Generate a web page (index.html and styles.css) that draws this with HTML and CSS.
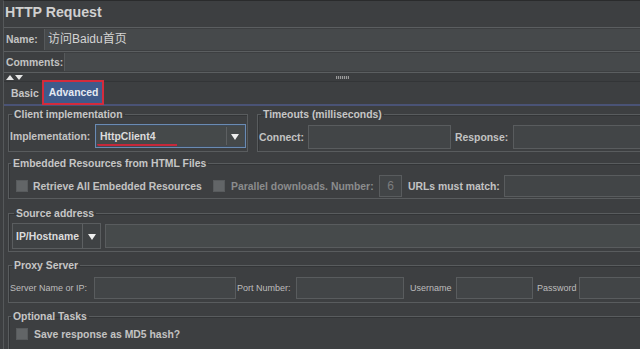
FILE: index.html
```html
<!DOCTYPE html>
<html>
<head>
<meta charset="utf-8">
<link rel="stylesheet" href="styles.css">
</head>
<body>
<div class="app">
  <div class="title">HTTP Request</div>
  <div class="row name-row">
    <span class="lbl name-lbl">Name:</span>
    <div class="field name-field">访问Baidu首页</div>
  </div>
  <div class="row comments-row">
    <span class="lbl comments-lbl">Comments:</span>
    <div class="field"></div>
  </div>
  <div class="splitter">
    <svg class="arrows" width="18" height="7" viewBox="0 0 18 7"><polygon points="0,6 4,1 8,6" fill="#e6e6e6"/><polygon points="9,1 17,1 13,6" fill="#e6e6e6"/></svg>
    <span class="grip"></span>
  </div>
  <div class="tabs">
    <span class="tab">Basic</span>
    <span class="tab active">Advanced</span>
  </div>
  <div class="panel">
    <div class="grp-row">
      <fieldset class="grp client">
        <legend>Client implementation</legend>
        <div class="line">
          <span class="lbl impl-lbl">Implementation:</span>
          <div class="combo focus">
            <span class="combo-text">HttpClient4</span>
            <span class="combo-btn"><svg width="8" height="7" viewBox="0 0 8 7"><polygon points="0,1 8,1 4,7" fill="#eee"/></svg></span>
            <span class="mark"></span>
          </div>
        </div>
      </fieldset>
      <fieldset class="grp timeouts open">
        <legend>Timeouts (milliseconds)</legend>
        <div class="line">
          <span class="lbl conn-lbl">Connect:</span>
          <div class="input w-connect"></div>
          <span class="lbl resp-lbl">Response:</span>
          <div class="input grow"></div>
        </div>
      </fieldset>
    </div>
    <fieldset class="grp embedded open">
      <legend>Embedded Resources from HTML Files</legend>
      <div class="line">
        <span class="check"></span><span class="lbl cb-lbl retr-lbl">Retrieve All Embedded Resources</span>
        <span class="check"></span><span class="lbl cb-lbl par-lbl disabled">Parallel downloads. Number:</span>
        <div class="input num">6</div>
        <span class="lbl urls-lbl">URLs must match:</span>
        <div class="input grow"></div>
      </div>
    </fieldset>
    <fieldset class="grp source open">
      <legend>Source address</legend>
      <div class="line">
        <div class="combo ip">
          <span class="combo-text">IP/Hostname</span>
          <span class="combo-btn"><svg width="8" height="7" viewBox="0 0 8 7"><polygon points="0,1 8,1 4,7" fill="#eee"/></svg></span>
        </div>
        <div class="input grow src-input"></div>
      </div>
    </fieldset>
    <fieldset class="grp proxy open">
      <legend>Proxy Server</legend>
      <div class="line">
        <span class="small server-lbl">Server Name or IP:</span>
        <div class="input w-server"></div>
        <span class="small port-lbl">Port Number:</span>
        <div class="input w-port"></div>
        <span class="small user-lbl">Username</span>
        <div class="input w-user"></div>
        <span class="small pass-lbl">Password</span>
        <div class="input grow"></div>
      </div>
    </fieldset>
    <fieldset class="grp optional open">
      <legend>Optional Tasks</legend>
      <div class="line">
        <span class="check"></span><span class="lbl cb-lbl md5">Save response as MD5 hash?</span>
      </div>
    </fieldset>
  </div>
</div>
</body>
</html>
```
FILE: styles.css
```css
html, body {
  margin: 0;
  padding: 0;
}
body {
  width: 640px;
  height: 349px;
  overflow: hidden;
  background: #3d3f41;
  font-family: "Liberation Sans", Arial, "Noto Sans CJK SC", sans-serif;
  font-weight: bold;
  font-size: 10.4px;
  color: #c3c3c3;
}
.app {
  margin-left: 3px;
  height: 349px;
  border-left: 1px solid #55585a;
  border-top: 1px solid #2a2b2c;
  box-sizing: border-box;
}
.title {
  height: 26px;
  line-height: 22px;
  font-size: 14.2px;
  padding-left: 1px;
  color: #d0d0d0;
}
.row {
  display: flex;
  border-top: 1px solid #5b5e60;
}
.name-row { height: 23px; }
.comments-row {
  height: 20px;
  border-bottom: 1px solid #5b5e60;
}
.lbl {
  white-space: nowrap;
  display: flex;
  align-items: center;
  flex: none;
}
.name-lbl { width: 38px; padding-left: 2px; }
.comments-lbl { width: 58px; padding-left: 2px; }
.field {
  flex: 1;
  background: #46494b;
  border-left: 1px solid #56595b;
  margin: 1px 0;
}
.name-field {
  font-weight: normal;
  font-size: 12px;
  line-height: 21px;
  padding-left: 3px;
  color: #d4d4d4;
}
.splitter {
  height: 8px;
  display: flex;
  align-items: center;
  border-bottom: 1px solid #333537;
  background: #3b3d3f;
}
.arrows { margin-left: 2px; }
.grip {
  margin-left: 312px;
  width: 13px;
  height: 3px;
  background: repeating-linear-gradient(90deg, #9a9a9a 0 1px, #4a4c4e 1px 2px);
}
.tabs {
  height: 22px;
  display: flex;
  align-items: flex-end;
  border-bottom: 2px solid #4a5376;
}
.tab {
  padding: 0 3px 3px 7px;
  line-height: 14px;
  color: #c6c6c6;
}
.tab.active {
  box-sizing: border-box;
  width: 62px;
  height: 25px;
  margin-bottom: -1px;
  padding: 4px 0 0 5px;
  line-height: 14px;
  background: #3f5a8a;
  border: 2px solid #d42b3c;
  color: #e4e9f2;
}
.panel {
  padding: 2px 0 0 4px;
  display: flex;
  flex-direction: column;
}
.grp-row { display: flex; }
.grp {
  margin: 0;
  padding: 0;
  min-width: 0;
  border: 1px solid #595c5e;
  box-shadow: inset 1px 1px 0 #333537;
}
.grp.open { border-right: none; }
.grp legend {
  padding: 0 2px;
  margin-left: 2px;
  line-height: 13px;
  color: #c6c6c6;
}
.line {
  display: flex;
  align-items: center;
}
.client {
  width: 240px;
  box-sizing: border-box;
  padding: 3px 1px 3px 1px;
}
.impl-lbl { width: 85px; }
.timeouts {
  flex: 1;
  margin-left: 9px;
  padding: 4px 0 2px 1px;
}
.combo {
  position: relative;
  display: flex;
  align-items: center;
  box-sizing: border-box;
  background: #45494a;
  border: 1px solid #5a5d5f;
}
.combo.focus {
  width: 151px;
  height: 24px;
  border: 1px solid #6a8bb3;
  box-shadow: inset 0 0 0 1px #3f4a57;
}
.combo-text {
  flex: 1;
  padding-left: 4px;
  color: #dcdcdc;
  white-space: nowrap;
}
.combo-btn {
  width: 16px;
  align-self: stretch;
  display: flex;
  align-items: center;
  justify-content: center;
  border-left: 1px solid #5d6062;
}
.focus .combo-btn { margin: 2px 2px 2px 0; }
.mark {
  position: absolute;
  left: 1px;
  top: 19px;
  width: 80px;
  height: 2px;
  background: #c6283a;
  border-radius: 0 0 2px 40px;
}
.input {
  box-sizing: border-box;
  height: 24px;
  background: #424547;
  border: 1px solid #595c5e;
  flex: none;
}
.grow { flex: 1; border-right: none; }
.conn-lbl { width: 49px; }
.w-connect { width: 143px; }
.resp-lbl { margin-left: 4px; width: 58px; }
.embedded {
  margin-top: 5px;
  padding: 5px 0 1px 0;
}
.check {
  box-sizing: border-box;
  width: 12px;
  height: 12px;
  background: #626567;
  border: 1px solid #585b5d;
  flex: none;
}
.embedded .check:first-child { margin-left: 7px; }
.optional .check { margin-left: 7px; }
.cb-lbl { margin-left: 5px; }
.retr-lbl { width: 180px; }
.par-lbl { width: 148px; margin-left: 6px; }
.disabled { color: #8b8c8d; }
.embedded .input { height: 22px; }
.num {
  width: 23px;
  color: #7c7d7e;
  font-weight: normal;
  font-size: 12px;
  line-height: 20px;
  text-align: center;
}
.urls-lbl { margin-left: 6px; width: 96px; }
.source {
  margin-top: 8px;
  padding: 3px 0 2px 3px;
}
.combo.ip {
  width: 89px;
  height: 26px;
  background: #3f4244;
  flex: none;
}
.ip .combo-text { padding-left: 3px; }
.ip .combo-btn { width: 17px; }
.src-input {
  margin-left: 4px;
  height: 24px;
  background: #464a4b;
}
.proxy {
  margin-top: 7px;
  padding: 5px 0 3px 1px;
}
.small {
  font-weight: normal;
  font-size: 9px;
  color: #bdbdbd;
  white-space: nowrap;
  flex: none;
}
.proxy .input { height: 22px; }
.server-lbl { width: 84px; }
.w-server { width: 142px; }
.port-lbl { width: 59px; margin-left: 1px; }
.w-port { width: 108px; }
.user-lbl { width: 46px; margin-left: 6px; }
.w-user { width: 77px; }
.pass-lbl { width: 42px; margin-left: 4px; }
.optional {
  margin-top: 7px;
  padding: 5px 0 4px 0;
  height: 30px;
}
.md5 { margin-left: 6px; }
```
